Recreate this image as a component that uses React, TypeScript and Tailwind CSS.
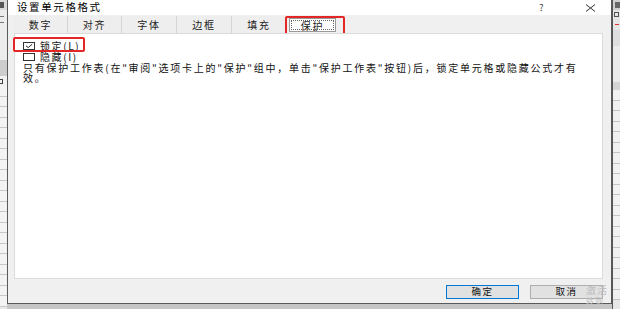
import React from 'react';

const font = { fontFamily: '"Noto Sans CJK SC", "Noto Sans", sans-serif' };

const tabs = ['数字', '对齐', '字体', '边框', '填充'];
const leftRows = Array.from({ length: 21 });
const rightRows = Array.from({ length: 20 });

const CheckBox: React.FC<{ checked?: boolean }> = ({ checked }) => (
  <svg width="12" height="8" viewBox="0 0 12 8" className="shrink-0">
    <rect x="0.5" y="0.5" width="11" height="7" fill="#fff" stroke="#333" />
    {checked && <polyline points="3,3.8 5.2,5.6 9.2,2.2" fill="none" stroke="#222" strokeWidth="1" />}
  </svg>
);

const SheetStripLeft = () => (
  <div className="w-[7px] h-full flex flex-col bg-[#e9e9e9] overflow-hidden">
    <div className="h-[10px] bg-[#d8d8d8] flex items-center">
      <div className="w-[4px] h-[6px] bg-[#555]" />
    </div>
    <div className="h-[50px] bg-[#ececec] flex flex-col gap-[5px] pt-[6px]">
      <div className="h-[1px] w-[4px] bg-[#777]" />
      <div className="h-[1px] w-[4px] bg-[#777]" />
    </div>
    <div className="h-[16px] bg-[#cdcdcd]" />
    <div className="h-[10px] bg-[#f2f2f2] flex items-center">
      <div className="w-[3px] h-[5px] border border-l-0 border-[#444]" />
    </div>
    {leftRows.map((_, i) => (
      <div key={i} className="h-[10.5px] shrink-0 border-b border-[#c9c9c9] bg-[#f3f3f3]" />
    ))}
  </div>
);

const SheetStripRight = () => (
  <div className="w-[8px] h-full flex flex-col bg-[#e6e6e6] overflow-hidden border-l border-[#555]">
    <div className="h-[10px] bg-[#cfcfcf] flex items-center pl-[2px]">
      <div className="w-[5px] h-[6px] bg-[#666]" />
    </div>
    <div className="h-[8px] flex items-center pl-[1px]">
      <div className="w-[5px] h-[5px] border border-[#555]" />
    </div>
    <div className="h-[12px] flex items-center pl-[2px]">
      <div className="w-[4px] h-[1px] bg-[#d33]" />
    </div>
    <div className="h-[16px] bg-[#dedede]" />
    <div className="h-[36px] bg-[#eaeaea]" />
    <div className="h-[8px] bg-[#d4d4d4]" />
    {rightRows.map((_, i) => (
      <div key={i} className="h-[10.5px] shrink-0 border-b border-[#c4c4c4] bg-[#f1f1f1]" />
    ))}
  </div>
);

const App: React.FC = () => (
  <div className="relative w-[620px] h-[309px] overflow-hidden bg-[#cfcfcf] flex" style={font}>
    <SheetStripLeft />
    <div className="w-[605px] h-full flex flex-col">
      <div className="h-[304px] flex flex-col border-l border-r border-b border-[#5a5a5a] bg-[#f0f0f0]">
        {/* title bar */}
        <div className="h-[15px] bg-white flex items-center pl-[9px] pr-[15px] text-[10.5px] text-black tracking-[1.6px]">
          <span className="flex-1 leading-none">设置单元格格式</span>
          <span className="text-[9px] text-[#333] mr-[40px] leading-none">?</span>
          <svg width="11" height="8" viewBox="0 0 11 8">
            <path d="M1 0.5 L10 7.5 M10 0.5 L1 7.5" stroke="#333" strokeWidth="1" />
          </svg>
        </div>

        {/* tabs */}
        <div className="h-[18px] flex pl-[6px] items-end">
          {tabs.map((t, i) => (
            <div
              key={t}
              className={`h-[17px] ${i < 2 ? 'w-[54px]' : 'w-[55px]'} flex items-center justify-center border-r border-[#d5d5d5] bg-[#eeeeee] text-[10px] tracking-[1.8px] text-[#222]`}
            >
              {t}
            </div>
          ))}
          <div className="relative ml-[2px] mb-[1px] w-[47px] h-[14px] bg-white border border-[#9a9a9a] flex items-center justify-center">
            <div className="absolute inset-[1px] border border-dotted border-[#666]" />
            <span className="text-[10px] tracking-[1.8px] text-[#222]">保护</span>
            <div className="absolute -left-[5px] -top-[3px] w-[60px] h-[19px] border-2 border-[#e32626] rounded-[2px]" />
          </div>
        </div>

        {/* panel */}
        <div className="relative ml-[6px] mr-[8px] h-[246px] bg-white border border-[#dcdcdc] pl-[8px] pt-[6px] text-[10px] text-[#111]">
          <div className="h-[11px] flex items-center gap-[5px]">
            <CheckBox checked />
            <span className="tracking-[1.6px] leading-[11px]">锁定(L)</span>
          </div>
          <div className="h-[11px] flex items-center gap-[5px]">
            <CheckBox />
            <span className="tracking-[1.6px] leading-[11px]">隐藏(I)</span>
          </div>
          <p className="mt-[1px] leading-[10px] tracking-[1.75px] whitespace-nowrap">
            只有保护工作表(在"审阅"选项卡上的"保护"组中，单击"保护工作表"按钮)后，锁定单元格或隐藏公式才有
            <br />
            效。
          </p>
          <div className="absolute left-[-2px] top-[3px] w-[72px] h-[15px] border-2 border-[#e32626] rounded-[2px]" />
        </div>

        {/* buttons */}
        <div className="flex-1 flex justify-end items-start pt-[6px] pr-[8px] gap-[11px]">
          <button className="w-[73px] h-[14px] bg-[#e1e1e1] border border-[#0078d7] text-[9.5px] tracking-[1.6px] text-[#111] leading-none">
            确定
          </button>
          <button className="w-[73px] h-[14px] bg-[#e1e1e1] border border-[#adadad] text-[9.5px] tracking-[1.6px] text-[#111] leading-none">
            取消
          </button>
        </div>
      </div>
      <div className="flex-1 bg-[#c6c6c6]" />
    </div>
    <SheetStripRight />

    {/* windows activation watermark */}
    <div className="absolute left-[586px] top-[284px] flex flex-col text-[#bdbdbd] whitespace-nowrap tracking-[1px]">
      <span className="text-[10px] leading-[12px]">激活</span>
      <span className="text-[8px] leading-[10px]">转到</span>
    </div>
  </div>
);

export default App;
